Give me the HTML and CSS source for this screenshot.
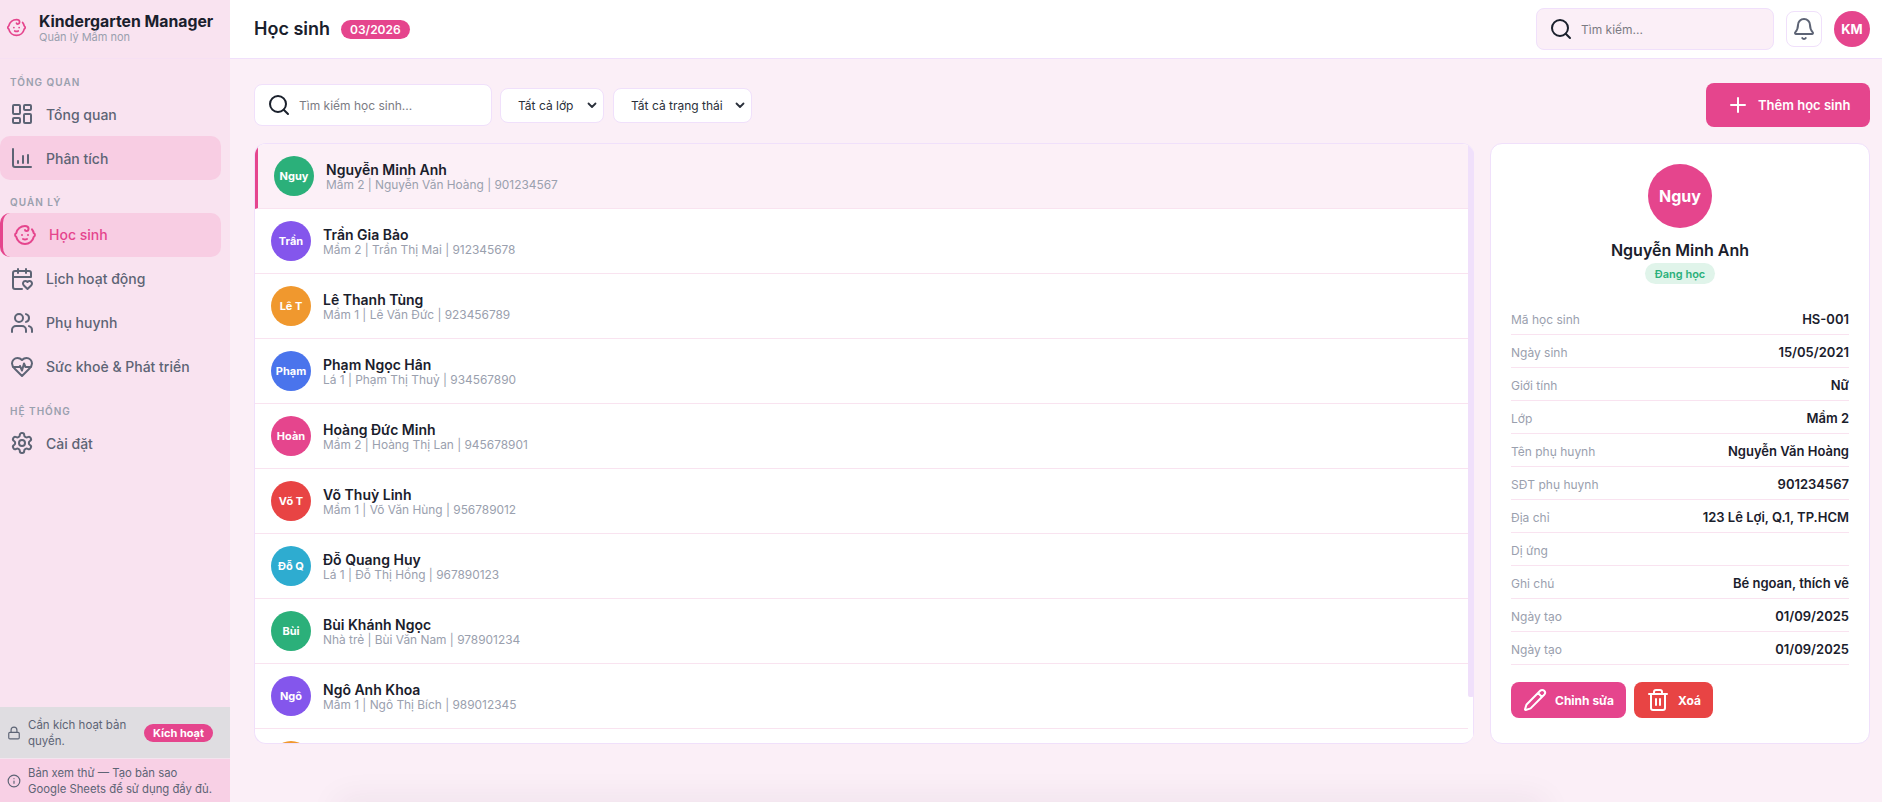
FILE: index.html
```html
<!DOCTYPE html>
<html lang="vi">
<head>
<meta charset="utf-8">
<title>Học sinh - Kindergarten Manager</title>
<link rel="stylesheet" href="styles.css">
</head>
<body>
<div class="app">
  <aside class="sidebar">
    <div class="brand">
      <svg class="ic brand-ic" viewBox="0 0 24 24"><path d="M9 12h.01M15 12h.01M10 16c.5.3 1.2.5 2 .5s1.5-.2 2-.5M19 6.3a9 9 0 0 1 1.8 3.9 2 2 0 0 1 0 3.6 9 9 0 0 1-17.6 0 2 2 0 0 1 0-3.6A9 9 0 0 1 12 3c2 0 3.5 1.1 3.5 2.5s-.9 2.5-2 2.5c-.8 0-1.5-.4-1.5-1"/></svg>
      <div>
        <div class="brand-name">Kindergarten Manager</div>
        <div class="brand-sub">Quản lý Mầm non</div>
      </div>
    </div>
    <nav class="nav">
      <div class="nav-label">TỔNG QUAN</div>
      <a class="nav-item"><svg class="ic" viewBox="0 0 24 24"><rect x="3" y="3" width="7" height="9" rx="1"/><rect x="14" y="3" width="7" height="5" rx="1"/><rect x="14" y="12" width="7" height="9" rx="1"/><rect x="3" y="16" width="7" height="5" rx="1"/></svg>Tổng quan</a>
      <a class="nav-item hover"><svg class="ic" viewBox="0 0 24 24"><path d="M3 3v16a2 2 0 0 0 2 2h16M18 17V9M13 17V10M8 17v-2"/></svg>Phân tích</a>
      <div class="nav-label">QUẢN LÝ</div>
      <a class="nav-item active"><svg class="ic" viewBox="0 0 24 24"><path d="M9 12h.01M15 12h.01M10 16c.5.3 1.2.5 2 .5s1.5-.2 2-.5M19 6.3a9 9 0 0 1 1.8 3.9 2 2 0 0 1 0 3.6 9 9 0 0 1-17.6 0 2 2 0 0 1 0-3.6A9 9 0 0 1 12 3c2 0 3.5 1.1 3.5 2.5s-.9 2.5-2 2.5c-.8 0-1.5-.4-1.5-1"/></svg>Học sinh</a>
      <a class="nav-item"><svg class="ic" viewBox="0 0 24 24"><path d="M3 10h18V6a2 2 0 0 0-2-2H5a2 2 0 0 0-2 2v14a2 2 0 0 0 2 2h7M8 2v4M16 2v4M21.29 14.7a2.43 2.43 0 0 0-2.65-.52c-.3.12-.57.3-.8.53l-.34.34-.35-.34a2.43 2.43 0 0 0-2.65-.53c-.3.12-.56.3-.79.53-.95.94-1 2.53.2 3.74L17.5 22l3.6-3.55c1.2-1.21 1.14-2.8.19-3.74Z"/></svg>Lịch hoạt động</a>
      <a class="nav-item"><svg class="ic" viewBox="0 0 24 24"><path d="M16 21v-2a4 4 0 0 0-4-4H6a4 4 0 0 0-4 4v2"/><circle cx="9" cy="7" r="4"/><path d="M22 21v-2a4 4 0 0 0-3-3.87M16 3.13a4 4 0 0 1 0 7.75"/></svg>Phụ huynh</a>
      <a class="nav-item"><svg class="ic" viewBox="0 0 24 24"><path d="M19 14c1.49-1.46 3-3.21 3-5.5A5.5 5.5 0 0 0 16.5 3c-1.76 0-3 .5-4.5 2-1.5-1.5-2.74-2-4.5-2A5.5 5.5 0 0 0 2 8.5c0 2.3 1.5 4.05 3 5.5l7 7Z"/><path d="M3.22 12H9.5l.5-1 2 4.5 2-7 1.5 3.5h5.27"/></svg>Sức khoẻ &amp; Phát triển</a>
      <div class="nav-label">HỆ THỐNG</div>
      <a class="nav-item"><svg class="ic" viewBox="0 0 24 24"><path d="M12.22 2h-.44a2 2 0 0 0-2 2v.18a2 2 0 0 1-1 1.73l-.43.25a2 2 0 0 1-2 0l-.15-.08a2 2 0 0 0-2.73.73l-.22.38a2 2 0 0 0 .73 2.73l.15.1a2 2 0 0 1 1 1.72v.51a2 2 0 0 1-1 1.74l-.15.09a2 2 0 0 0-.73 2.73l.22.38a2 2 0 0 0 2.73.73l.15-.08a2 2 0 0 1 2 0l.43.25a2 2 0 0 1 1 1.73V20a2 2 0 0 0 2 2h.44a2 2 0 0 0 2-2v-.18a2 2 0 0 1 1-1.73l.43-.25a2 2 0 0 1 2 0l.15.08a2 2 0 0 0 2.73-.73l.22-.39a2 2 0 0 0-.73-2.73l-.15-.08a2 2 0 0 1-1-1.74v-.5a2 2 0 0 1 1-1.74l.15-.09a2 2 0 0 0 .73-2.73l-.22-.38a2 2 0 0 0-2.73-.73l-.15.08a2 2 0 0 1-2 0l-.43-.25a2 2 0 0 1-1-1.73V4a2 2 0 0 0-2-2z"/><circle cx="12" cy="12" r="3"/></svg>Cài đặt</a>
    </nav>
    <div class="license">
      <svg class="ic ic-sm" viewBox="0 0 24 24"><rect x="3" y="11" width="18" height="11" rx="2"/><path d="M7 11V7a5 5 0 0 1 10 0v4"/></svg>
      <span class="license-text">Cần kích hoạt bản quyền.</span>
      <span class="license-btn">Kích hoạt</span>
    </div>
    <div class="preview">
      <svg class="ic ic-sm" viewBox="0 0 24 24"><circle cx="12" cy="12" r="10"/><path d="M12 16v-4M12 8h.01"/></svg>
      <span>Bản xem thử — Tạo bản sao<br>Google Sheets để sử dụng đầy đủ.</span>
    </div>
  </aside>

  <div class="main">
    <header class="topbar">
      <h1 class="title">Học sinh</h1>
      <span class="period">03/2026</span>
      <div class="top-search">
        <svg class="ic ic-dark" viewBox="0 0 24 24"><circle cx="11" cy="11" r="8"/><path d="m21 21-4.3-4.3"/></svg>
        <span>Tìm kiếm...</span>
      </div>
      <div class="bell"><svg class="ic" viewBox="0 0 24 24"><path d="M10.268 21a2 2 0 0 0 3.464 0M3.262 15.326A1 1 0 0 0 4 17h16a1 1 0 0 0 .74-1.673C19.41 13.956 18 12.499 18 8A6 6 0 0 0 6 8c0 4.499-1.411 5.956-2.738 7.326"/></svg></div>
      <div class="user">KM</div>
    </header>

    <main class="content">
      <div class="toolbar">
        <div class="search">
          <svg class="ic ic-dark" viewBox="0 0 24 24"><circle cx="11" cy="11" r="8"/><path d="m21 21-4.3-4.3"/></svg>
          <span>Tìm kiếm học sinh...</span>
        </div>
        <div class="select select-class">Tất cả lớp<svg class="chev" viewBox="0 0 12 12"><path d="M2.5 4.5 6 8l3.5-3.5"/></svg></div>
        <div class="select select-status">Tất cả trạng thái<svg class="chev" viewBox="0 0 12 12"><path d="M2.5 4.5 6 8l3.5-3.5"/></svg></div>
        <button class="add-btn"><svg class="ic" viewBox="0 0 24 24"><path d="M5 12h14M12 5v14"/></svg>Thêm học sinh</button>
      </div>

      <div class="split">
        <section class="list">
          <div class="list-scroll">
            <div class="row selected"><div class="av green">Nguy</div><div><div class="name">Nguyễn Minh Anh</div><div class="meta">Mầm 2 | Nguyễn Văn Hoàng | 901234567</div></div></div>
            <div class="row"><div class="av purple">Trần</div><div><div class="name">Trần Gia Bảo</div><div class="meta">Mầm 2 | Trần Thị Mai | 912345678</div></div></div>
            <div class="row"><div class="av orange">Lê T</div><div><div class="name">Lê Thanh Tùng</div><div class="meta">Mầm 1 | Lê Văn Đức | 923456789</div></div></div>
            <div class="row"><div class="av blue">Phạm</div><div><div class="name">Phạm Ngọc Hân</div><div class="meta">Lá 1 | Phạm Thị Thuỷ | 934567890</div></div></div>
            <div class="row"><div class="av pink">Hoàn</div><div><div class="name">Hoàng Đức Minh</div><div class="meta">Mầm 2 | Hoàng Thị Lan | 945678901</div></div></div>
            <div class="row"><div class="av red">Võ T</div><div><div class="name">Võ Thuỳ Linh</div><div class="meta">Mầm 1 | Võ Văn Hùng | 956789012</div></div></div>
            <div class="row"><div class="av cyan">Đỗ Q</div><div><div class="name">Đỗ Quang Huy</div><div class="meta">Lá 1 | Đỗ Thị Hồng | 967890123</div></div></div>
            <div class="row"><div class="av green">Bùi</div><div><div class="name">Bùi Khánh Ngọc</div><div class="meta">Nhà trẻ | Bùi Văn Nam | 978901234</div></div></div>
            <div class="row"><div class="av purple">Ngô</div><div><div class="name">Ngô Anh Khoa</div><div class="meta">Mầm 1 | Ngô Thị Bích | 989012345</div></div></div>
            <div class="row"><div class="av orange"></div></div>
          </div>
          <div class="track"><div class="thumb"></div></div>
        </section>

        <aside class="detail">
          <div class="detail-av">Nguy</div>
          <div class="detail-name">Nguyễn Minh Anh</div>
          <div class="status">Đang học</div>
          <dl class="facts">
            <div class="fact"><dt>Mã học sinh</dt><dd>HS-001</dd></div>
            <div class="fact"><dt>Ngày sinh</dt><dd>15/05/2021</dd></div>
            <div class="fact"><dt>Giới tính</dt><dd>Nữ</dd></div>
            <div class="fact"><dt>Lớp</dt><dd>Mầm 2</dd></div>
            <div class="fact"><dt>Tên phụ huynh</dt><dd>Nguyễn Văn Hoàng</dd></div>
            <div class="fact"><dt>SĐT phụ huynh</dt><dd>901234567</dd></div>
            <div class="fact"><dt>Địa chỉ</dt><dd>123 Lê Lợi, Q.1, TP.HCM</dd></div>
            <div class="fact"><dt>Dị ứng</dt><dd></dd></div>
            <div class="fact"><dt>Ghi chú</dt><dd>Bé ngoan, thích vẽ</dd></div>
            <div class="fact"><dt>Ngày tạo</dt><dd>01/09/2025</dd></div>
            <div class="fact"><dt>Ngày tạo</dt><dd>01/09/2025</dd></div>
          </dl>
          <div class="actions">
            <button class="act act-edit"><svg class="ic" viewBox="0 0 24 24"><path d="M21.174 6.812a1 1 0 0 0-3.986-3.987L3.842 16.174a2 2 0 0 0-.5.83l-1.321 4.352a.5.5 0 0 0 .623.622l4.353-1.32a2 2 0 0 0 .83-.497zM15 5l4 4"/></svg>Chỉnh sửa</button>
            <button class="act act-del"><svg class="ic" viewBox="0 0 24 24"><path d="M3 6h18M19 6v14c0 1-1 2-2 2H7c-1 0-2-1-2-2V6M8 6V4c0-1 1-2 2-2h4c1 0 2 1 2 2v2M10 11v6M14 11v6"/></svg>Xoá</button>
          </div>
        </aside>
      </div>
    </main>
  </div>
</div>
</body>
</html>
```

FILE: styles.css
```css
* { box-sizing: border-box; }
html, body { margin: 0; height: 100%; overflow: hidden; }
body {
  font-family: Inter, "Noto Sans", sans-serif;
  color: #1a202c;
  background: #fbeff7;
}
.app { display: flex; height: 802px; }

.ic {
  width: 24px; height: 24px; flex: none;
  fill: none; stroke: currentColor; stroke-width: 2;
  stroke-linecap: round; stroke-linejoin: round;
}
.ic-sm { width: 14px; height: 14px; }
.ic-dark { color: #1a202c; }

/* Sidebar */
.sidebar {
  width: 230px; flex: none;
  display: flex; flex-direction: column;
  background: #f9e3f0;
  color: #5d6475;
}
.brand {
  height: 59px; flex: none;
  display: flex; align-items: center; gap: 12px;
  padding: 0 4px 3px 6px;
  border-bottom: 1px solid #f6e0f3;
}
.brand-ic { width: 21px; height: 21px; color: #e5458d; }
.brand-name { font-size: 15.8px; line-height: 19px; font-weight: 700; color: #1a202c; white-space: nowrap; }
.brand-sub { font-size: 11px; line-height: 13px; color: #9aa0ae; }
.nav { flex: 1; display: flex; flex-direction: column; padding-right: 9px; }
.nav-label {
  height: 32.5px; flex: none;
  padding: 15px 0 0 10px;
  font-size: 10px; line-height: 14px; font-weight: 600;
  letter-spacing: 1px; color: #9aa0ae;
  white-space: nowrap;
}
.nav-label:first-child { height: 33px; padding-top: 16px; }
.nav-item {
  height: 44px; flex: none;
  display: flex; align-items: center; gap: 12px;
  padding-left: 10px;
  border-radius: 10px;
  font-size: 14px; font-weight: 500;
}
.nav-item.hover { background: #f8cde3; }
.nav-item.active {
  background: #f8cde3; color: #e5458d;
  border-left: 3px solid #e5458d;
}
.license {
  height: 52px; flex: none;
  display: flex; align-items: center; gap: 7px;
  padding: 0 17px 0 7px;
  background: #dfdde1;
  border-bottom: 1px solid #f3e4ee;
  font-size: 11.5px; line-height: 16px;
}
.license-text { width: 106px; }
.license-btn {
  margin-left: auto;
  height: 18px; padding: 0 9px;
  display: flex; align-items: center;
  border-radius: 9px;
  background: #e5458d; color: #fff;
  font-size: 11px; font-weight: 700; white-space: nowrap;
}
.preview {
  height: 43px; flex: none;
  display: flex; align-items: center; gap: 7px;
  padding: 0 0 0 7px;
  background: #f8d0e5;
  font-size: 11.3px; line-height: 16px;
  white-space: nowrap;
}

/* Main */
.main { flex: 1; min-width: 0; display: flex; flex-direction: column; position: relative; }
.main::after {
  content: "";
  position: absolute; left: 110px; right: 340px; bottom: -20px; height: 20px;
  box-shadow: 0 0 32px 2px rgba(60, 40, 60, .08);
}
.topbar {
  height: 59px; flex: none;
  display: flex; align-items: center;
  padding: 0 12px 0 24px;
  background: #fff;
  border-bottom: 1px solid #f0e0fb;
}
.title { margin: 0; font-size: 18px; line-height: 24px; font-weight: 600; color: #1a202c; }
.period {
  margin-left: 11px;
  height: 19px; padding: 0 9px;
  display: flex; align-items: center;
  border-radius: 10px;
  background: #e5458d; color: #fff;
  font-size: 12px; font-weight: 600;
}
.top-search {
  margin-left: auto;
  width: 238px; height: 42px;
  display: flex; align-items: center; gap: 8px;
  padding-left: 12px;
  background: #fbeff7;
  border: 1px solid #f0e0fb;
  border-radius: 8px;
  font-size: 12px; color: #7b7b83;
}
.bell {
  margin-left: 12px;
  width: 36px; height: 36px;
  display: flex; align-items: center; justify-content: center;
  background: #fff;
  border: 1px solid #f0e0fb;
  border-radius: 8px;
  color: #5d6475;
}
.user {
  margin-left: 12px;
  width: 36px; height: 36px;
  display: flex; align-items: center; justify-content: center;
  border-radius: 50%;
  background: #e5458d; color: #fff;
  font-size: 13px; font-weight: 700;
}

.content { flex: 1; min-height: 0; padding: 24px 12px 0 24px; }
.toolbar { height: 44px; display: flex; align-items: center; gap: 8px; margin-bottom: 16px; }
.search {
  width: 238px; height: 42px;
  display: flex; align-items: center; gap: 8px;
  padding-left: 12px;
  background: #fff;
  border: 1px solid #f0e0fb;
  border-radius: 8px;
  font-size: 12px; color: #7b7b83;
}
.select {
  height: 35px;
  display: flex; align-items: center; justify-content: space-between;
  padding: 0 5px 0 17px;
  background: #fff;
  border: 1px solid #f0e0fb;
  border-radius: 8px;
  font-size: 12px; color: #2a2f3a;
  white-space: nowrap;
}
.select-class { width: 104px; }
.select-status { width: 139px; margin-left: 1px; }
.chev { width: 12px; height: 12px; flex: none; fill: none; stroke: #2a2f3a; stroke-width: 1.8; stroke-linecap: round; stroke-linejoin: round; }
.add-btn {
  margin-left: auto;
  width: 164px; height: 44px;
  display: flex; align-items: center; gap: 8px;
  padding: 0 0 0 20px;
  border: 0; border-radius: 8px;
  background: #e5458d; color: #fff;
  font: 600 13px Inter, sans-serif;
  white-space: nowrap;
}

.split { display: flex; gap: 16px; height: 601px; }
.list {
  position: relative;
  width: 1220px; flex: none; height: 100%;
  padding-right: 6px;
  background: #fff;
  border: 1px solid #f0e0fb; border-right: 0;
  border-radius: 12px;
  overflow: hidden;
}
.list-scroll { height: 100%; overflow: hidden; }
.track {
  position: absolute; top: 0; right: 0; bottom: 0; width: 6px;
  border-right: 1px solid #f0e0fb;
}
.thumb { width: 6px; height: 553px; background: #f0e0fb; border-radius: 0 0 2px 2px; }
.row {
  height: 65px;
  display: flex; align-items: center; gap: 12px;
  padding: 0 16px;
  border-bottom: 1px solid #f9e3f0;
}
.row.selected { background: #fcf0f7; border-left: 3px solid #e5458d; }
.av {
  width: 40px; height: 40px; flex: none;
  display: flex; align-items: center; justify-content: center;
  border-radius: 50%;
  color: #fff; font-size: 11px; font-weight: 700;
}
.green { background: #2bb07a; }
.purple { background: #8456ec; }
.orange { background: #f0982e; }
.blue { background: #4a74ec; }
.pink { background: #e5458d; }
.red { background: #e84444; }
.cyan { background: #2eacd0; }
.name { font-size: 14px; line-height: 17px; font-weight: 600; color: #1a202c; }
.meta { font-size: 11.9px; line-height: 14px; color: #9aa0ae; }

.detail {
  width: 380px; flex: none; height: 100%;
  display: flex; flex-direction: column; align-items: center;
  padding: 20px;
  background: #fff;
  border: 1px solid #f0e0fb;
  border-radius: 12px;
}
.detail-av {
  width: 64px; height: 64px; flex: none;
  display: flex; align-items: center; justify-content: center;
  border-radius: 50%;
  background: #e5458d; color: #fff;
  font-size: 16px; font-weight: 700;
}
.detail-name { margin-top: 12px; font-size: 16px; line-height: 20px; font-weight: 600; color: #1a202c; }
.status {
  margin-top: 3px;
  height: 21px; padding: 0 10px;
  display: flex; align-items: center;
  border-radius: 11px;
  background: #e0f4ea; color: #2bb07a;
  font-size: 11px; font-weight: 600;
}
.facts { width: 100%; margin: 18px 0 0; }
.fact {
  height: 33px;
  display: flex; align-items: center; justify-content: space-between;
  border-bottom: 1px solid #f9e3f0;
  padding-top: 2px;
}
.fact dt { font-size: 12px; color: #9aa0ae; }
.fact dd { margin: 0; font-size: 13px; font-weight: 600; color: #1a202c; }
.actions { width: 100%; margin-top: 17px; display: flex; gap: 8px; }
.act {
  height: 36px;
  display: flex; align-items: center; gap: 8px;
  padding: 0 12px;
  border: 0; border-radius: 8px;
  color: #fff;
  font: 700 12px Inter, sans-serif;
  white-space: nowrap;
}
.act-edit { background: #e5458d; }
.act-del { background: #e84444; }
```
